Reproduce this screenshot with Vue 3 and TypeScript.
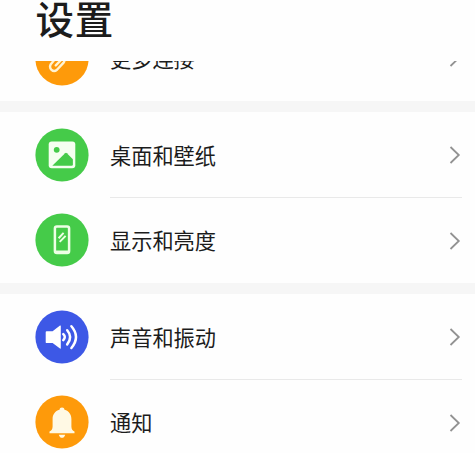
<script setup lang="ts">
type IconName = 'link' | 'picture' | 'phone' | 'sound' | 'bell'

interface SettingItem {
  label: string
  icon: IconName
  tone: 'orange' | 'green' | 'blue'
}

const groups: SettingItem[][] = [
  [{ label: '更多连接', icon: 'link', tone: 'orange' }],
  [
    { label: '桌面和壁纸', icon: 'picture', tone: 'green' },
    { label: '显示和亮度', icon: 'phone', tone: 'green' },
  ],
  [
    { label: '声音和振动', icon: 'sound', tone: 'blue' },
    { label: '通知', icon: 'bell', tone: 'orange' },
  ],
]
</script>

<template>
  <div class="screen">
    <header class="header">
      <h1 class="title">设置</h1>
    </header>
    <main class="viewport">
      <div class="list">
        <section v-for="(group, g) in groups" :key="g" class="group">
          <div v-for="item in group" :key="item.label" class="row">
            <svg class="icon" :class="item.tone" viewBox="0 0 54 54">
              <circle cx="27" cy="27" r="26.6" fill="currentColor" />
              <g v-if="item.icon === 'link'" fill="none" stroke="#fff3d2" stroke-width="2.4" stroke-linecap="round" stroke-linejoin="round">
                <path d="M20.5 26.5 L15.8 32.2 C13.4 36.5 18 41 22 37.8 L28.6 30.6 C30.5 27.5 30 23 27 21.5" />
                <path d="M20.8 33.4 L27.4 26.6 M33 25 L38 20 C42 15.5 36 10 32 14 L24 22" />
              </g>
              <g v-else-if="item.icon === 'picture'">
                <rect x="13.7" y="13.6" width="26.6" height="26.6" rx="3" fill="#f5fff0" />
                <circle cx="21.7" cy="21.8" r="2.9" fill="currentColor" />
                <path d="M17.3 37.8 L30.1 25.2 Q31 24.5 31.9 25.3 L37.9 31.2 V36.4 Q37.9 37.8 36.5 37.8 Z" fill="currentColor" />
              </g>
              <g v-else-if="item.icon === 'phone'" fill="none" stroke="#edffe5">
                <rect x="19.9" y="13.6" width="14.2" height="26.3" rx="2" stroke-width="2.5" />
                <path d="M20 38.8 H34" stroke-width="2.6" />
                <path d="M23.6 25.2 L28.6 19.9 M24.7 28.9 L30.6 22.9" stroke-width="2" />
              </g>
              <g v-else-if="item.icon === 'sound'">
                <path d="M11.6 21.3 H17.6 L25 15.6 Q25.8 15.1 25.8 16.1 V38 Q25.8 39 25 38.4 L17.6 33.1 H11.6 Q10.7 33.1 10.7 32.2 V22.2 Q10.7 21.3 11.6 21.3 Z" fill="#fff" />
                <g fill="none" stroke="#fff" stroke-width="2.5" stroke-linecap="round">
                  <path d="M28.3 24.2 Q31.3 27 28.3 30.2" />
                  <path d="M32.2 20.2 Q38.1 27 32.2 34.4" />
                  <path d="M36.4 16.3 Q45.6 27 36.4 38" />
                </g>
              </g>
              <g v-else fill="#fff9e4">
                <path d="M27 12.6 C28.6 12.6 29.2 13.5 29.5 14.8 C34 16 36.4 19.6 36.4 24 V31.4 C36.4 34 37.6 35.4 39.5 36.6 V38.3 H14.5 V36.6 C16.4 35.4 17.6 34 17.6 31.4 V24 C17.6 19.6 20 16 24.5 14.8 C24.8 13.5 25.4 12.6 27 12.6 Z" />
                <path d="M23.8 39.7 H30.2 Q29.4 42.8 27 42.8 Q24.6 42.8 23.8 39.7 Z" />
              </g>
            </svg>
            <div class="content">
              <span class="label">{{ item.label }}</span>
              <svg class="chevron" viewBox="0 0 12 20">
                <path d="M1.5 2 L9.8 10 L1.5 18" fill="none" stroke="#929292" stroke-width="1.8" />
              </svg>
            </div>
          </div>
        </section>
      </div>
    </main>
  </div>
</template>

<style>
body {
  background: #fefefe;
  overflow: hidden;
}
</style>

<style scoped>
.screen {
  display: flex;
  flex-direction: column;
  height: 453px;
  overflow: hidden;
  background: #fefefe;
  color: #1c1c1c;
  font-family: "Noto Sans CJK SC", "Noto Sans", sans-serif;
}
.header {
  flex: none;
  height: 61px;
  padding-left: 35.5px;
}
.title {
  margin: 0;
  font-size: 38.5px;
  font-weight: 500;
  letter-spacing: 0.8px;
  line-height: 34px;
}
.viewport {
  flex: 1;
  min-height: 0;
  overflow: hidden;
}
.list {
  margin-top: -45px;
}
.group + .group {
  border-top: 11px solid #f6f6f6;
}
.row {
  display: flex;
  align-items: center;
  height: 85px;
  padding: 0 13px 0 34.5px;
}
.row + .row {
  height: 86px;
}
.icon {
  flex: none;
  width: 54px;
  height: 54px;
  margin-right: 21.5px;
}
.orange {
  color: #fe9a0a;
}
.green {
  color: #45cb49;
}
.blue {
  color: #3d58e6;
}
.content {
  flex: 1;
  align-self: stretch;
  display: flex;
  align-items: center;
  justify-content: space-between;
}
.row + .row .content {
  border-top: 1px solid #e9e9e9;
}
.label {
  font-size: 21.2px;
  line-height: 32px;
}
.row + .row .label {
  padding-bottom: 2px;
}
.group:first-child .content {
  padding-bottom: 2px;
}
.chevron {
  width: 12px;
  height: 20px;
  margin-right: 1.5px;
}
</style>
